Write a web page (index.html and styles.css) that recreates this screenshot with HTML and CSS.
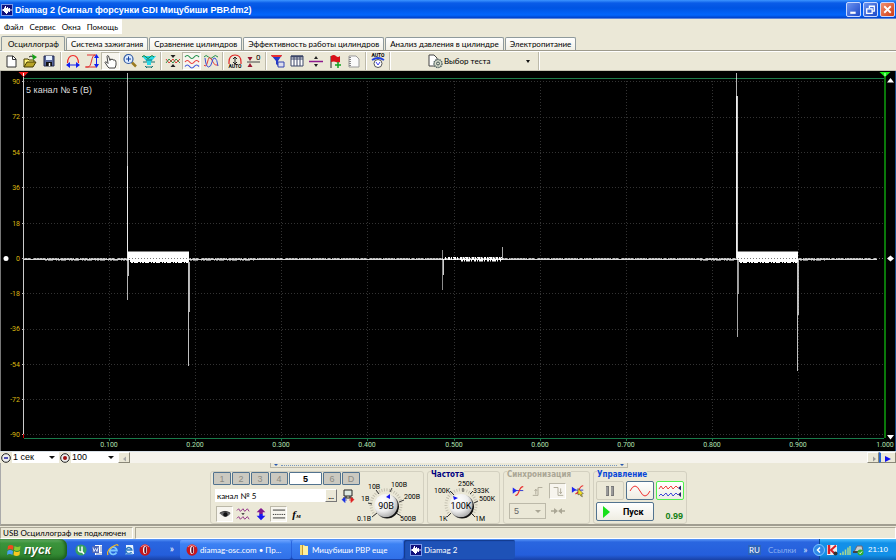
FILE: index.html
```html
<!DOCTYPE html>
<html lang="ru">
<head>
<meta charset="utf-8">
<title>Diamag 2</title>
<link rel="stylesheet" href="styles.css">
</head>
<body>
<svg class="defs" width="0" height="0" aria-hidden="true">
  <defs>
    <symbol id="app" viewBox="0 0 12 12"><rect width="12" height="12" fill="#7d9be8"/><rect x="1" y="1" width="10" height="10" fill="#10107c"/><path d="M1 6h1M2.500 5v2M3.500 3.500v4.500M4.500 2v7M5.500 4v6M6.500 3v6M7.500 4.500v3M8.500 4v4M9.500 5.500v1M10 6h1" stroke="#fff"/></symbol>
    <symbol id="opera" viewBox="0 0 12 12"><ellipse cx="6" cy="6" rx="5.500" ry="5.800" fill="#c8161c"/><path d="M2 3Q6-1 10 3" stroke="#f08080" fill="none"/><ellipse cx="6" cy="6" rx="2" ry="4" fill="#fff"/><ellipse cx="6.300" cy="6" rx="1" ry="3.600" fill="#5b0d25"/></symbol>
    <radialGradient id="dial" cx=".35" cy=".3" r=".75"><stop offset="0" stop-color="#fff"/><stop offset=".6" stop-color="#eee"/><stop offset="1" stop-color="#aaa"/></radialGradient>
    <linearGradient id="rim" x1="0" y1="0" x2="1" y2="1"><stop offset=".3" stop-color="#ddd"/><stop offset=".75" stop-color="#111"/></linearGradient>
  </defs>
</svg>

<header class="titlebar">
  <svg class="i12" aria-hidden="true"><use href="#app"/></svg>
  <h1>Diamag 2 (Сигнал форсунки GDI Мицубиши РВР.dm2)</h1>
  <div class="winbtns">
    <button class="winbtn" aria-label="Свернуть"><svg viewBox="0 0 12 12"><path d="M3 9h5" stroke="#fff" stroke-width="2"/></svg></button>
    <button class="winbtn" aria-label="Восстановить"><svg viewBox="0 0 12 12"><path d="M5 4.500V3h4.500v4.500H8M2.500 5.500h5v4h-5z" fill="none" stroke="#fff" stroke-width="1.200"/></svg></button>
    <button class="winbtn close" aria-label="Закрыть"><svg viewBox="0 0 12 12"><path d="M3 3l6 6M9 3l-6 6" stroke="#fff" stroke-width="1.700"/></svg></button>
  </div>
</header>

<nav class="menubar"><div class="menus">
  <button>Файл</button><button>Сервис</button><button>Окна</button><button>Помощь</button>
</div></nav>

<div class="tabs" role="tablist">
  <button class="tab active" role="tab" aria-selected="true">Осциллограф</button>
  <button class="tab" role="tab">Система зажигания</button>
  <button class="tab" role="tab">Сравнение цилиндров</button>
  <button class="tab" role="tab">Эффективность работы цилиндров</button>
  <button class="tab" role="tab">Анализ давления в цилиндре</button>
  <button class="tab" role="tab">Электропитание</button>
</div>

<div class="toolbar">
  <button class="tool" aria-label="Новый"><svg viewBox="0 0 16 16"><path d="M4 3h6l3 3v8H4z" fill="#fff" stroke="#333"/><path d="M9.500 3v3.500H13" fill="none" stroke="#333"/></svg></button>
  <button class="tool" aria-label="Открыть"><svg viewBox="0 0 16 16"><path d="M2 14V6h4l1 1h5v2" fill="#fff27a" stroke="#443c00"/><path d="M2 14l3-5h9l-3 5z" fill="#b8a428" stroke="#443c00"/><path d="M7 4q2-2 4 0" fill="none" stroke="#222"/><path d="M10 1l5 3-4 3z" fill="#16a016"/></svg></button>
  <button class="tool" aria-label="Сохранить"><svg viewBox="0 0 16 16"><path d="M3 3h10v10H3z" fill="#58679a" stroke="#222b50"/><path d="M5 3h6v4H5z" fill="#e8f2ff"/><path d="M5 9h6v4H5z" fill="#111"/><path d="M8.500 10v3" stroke="#fff" stroke-width="1.500"/></svg></button>
  <i class="sep"></i>
  <button class="tool" aria-label="Период"><svg viewBox="0 0 16 16"><path d="M2.500 10Q3 2.500 8 2.500T13.500 10" fill="none" stroke="#f02828" stroke-width="1.200"/><path d="M2 12h12" stroke="#1020f0"/><path d="M1 12l4-3v6zM15 12l-4-3v6z" fill="#1020f0"/></svg></button>
  <button class="tool" aria-label="Амплитуда"><svg viewBox="0 0 16 16"><path d="M1 14h3c4 0 3-12 7-12h1M3 2h8M2 14h10" fill="none" stroke="#e03030"/><path d="M12.500 3v11" stroke="#1020f0"/><path d="M12.500 1l2.500 4h-5zM12.500 15l2.500-4h-5z" fill="#1020f0"/></svg></button>
  <button class="tool on" aria-label="Рука"><svg viewBox="0 0 16 16"><path d="M5 14L2 9.500q0-1.500 2 0l1 1L4 3.500Q4 2 5.500 3L7 7.500 7.500 6q1-.5 1.500 1l.5-.8q1 0 1.300 1.300l.7-.5q1.500 0 1.500 2.500V12l-1 3H6z" fill="#fff" stroke="#333" stroke-width=".9"/></svg></button>
  <button class="tool" aria-label="Масштаб"><svg viewBox="0 0 16 16"><path d="M10 9.500l4 4" stroke="#9a7a20" stroke-width="2.500"/><circle cx="6.500" cy="6" r="4.500" fill="#ddecff" stroke="#3059a0" stroke-width="1.200"/><path d="M4 6h5M6.500 3.500v5" stroke="#1040a0"/></svg></button>
  <button class="tool" aria-label="Фильтр сигнала"><svg viewBox="0 0 16 16"><path d="M1 3h14L10 9v3H6V9z" fill="#28d8e8"/><path d="M1 4q2-3 4 0t4 0 4 0" fill="none" stroke="#188038"/><path d="M5 7h6M2 9h4M10 9h4M5 14h6M4 13l2 2M12 13l-2 2" stroke="#187070"/></svg></button>
  <i class="sep"></i>
  <button class="tool" aria-label="Сжать"><svg viewBox="0 0 16 16"><path d="M1 6l3 4 4-4 3 4 4-4" fill="none" stroke="#e02828" stroke-width=".9"/><path d="M1 10l3-4 4 4 3-4 4 4" fill="none" stroke="#208840" stroke-width=".9"/><path d="M8 5L5.500 2h5zM8 11l-2.500 3h5z" fill="#222"/></svg></button>
  <button class="tool on" aria-label="Раздельно"><svg viewBox="0 0 16 16"><g fill="none" stroke-width="1.200"><path d="M1 4q2.300-3 4.600 0t4.600 0 4.800 0" stroke="#20904a"/><path d="M1 9q2.300-3 4.600 0t4.600 0 4.800 0" stroke="#e83a3a"/><path d="M1 13.500q2.300-3 4.600 0t4.600 0 4.800 0" stroke="#3a50d8"/></g></svg></button>
  <button class="tool" aria-label="Совместно"><svg viewBox="0 0 16 16"><g fill="none"><path d="M1 4q2-3 4.500 0t4.500 0 5 0" stroke="#20904a"/><path d="M1 12q2 3 3.500-3t3-4 3 5 4.500 2" stroke="#e83a3a"/><path d="M2 5q1 9 3.500 9T9 9t3-4 3 8" stroke="#3a50d8"/></g></svg></button>
  <i class="sep"></i>
  <button class="tool" aria-label="Авто масштаб"><svg viewBox="0 0 16 16"><path d="M2 11V9Q2 2 8 2t6 7v2" fill="none" stroke="#e02828" stroke-width="1.200"/><path d="M8 4v7M6 6l2-2 2 2M6 9l2 2 2-2" fill="none" stroke="#222"/><text x="8" y="15" class="auto">AUTO</text></svg></button>
  <button class="tool" aria-label="Ноль"><svg viewBox="0 0 16 16"><path d="M1 9h6M7 9h7" stroke="#444"/><path d="M4 8L1.500 4h5zM4 10l-2.500 4h5z" fill="#981830"/><text x="10" y="7" class="zero">0</text></svg></button>
  <i class="sep"></i>
  <button class="tool" aria-label="Фильтр"><svg viewBox="0 0 16 16"><path d="M1 2h11L8 8v5L6 11V8z" fill="#2438c8"/><path d="M1 2h11l-1 2H2z" fill="#e83030"/><path d="M8 9h6v5H8z" fill="#dde" stroke="#3344b0"/></svg></button>
  <button class="tool" aria-label="Таблица"><svg viewBox="0 0 16 16"><path d="M2 3h12v10H2zM2 6h12M5 3v10M8 3v10M11 3v10" fill="#fff" stroke="#3c4668"/><path d="M2 3.500h12" stroke="#3c4668" stroke-width="2"/></svg></button>
  <button class="tool" aria-label="Разделить"><svg viewBox="0 0 16 16"><path d="M1 8.500h14" stroke="#8c188c" stroke-width="1.500"/><path d="M8 3l2 3H6zM8 14l2-3H6z" fill="#222"/></svg></button>
  <button class="tool" aria-label="Метка"><svg viewBox="0 0 16 16"><path d="M4 3v12" stroke="#222"/><path d="M4 3q3-2 5 0t4 0v6q-2 1-4 0T4 9z" fill="#d81018"/><path d="M11 9v6M8 12h6" stroke="#10a020" stroke-width="1.500"/></svg></button>
  <button class="tool" aria-label="Отчёт"><svg viewBox="0 0 16 16"><path d="M3 3h7l3 3v8H3z" fill="#fafafa" stroke="#999"/><path d="M4 4v10" stroke="#888" stroke-width="2" stroke-dasharray="1 1"/></svg></button>
  <i class="sep"></i>
  <button class="tool" aria-label="Автотест"><svg viewBox="0 0 16 16"><text x="8" y="4" class="auto">AUTO</text><path d="M2 7q6-4 12 0" fill="none" stroke="#2040e0" stroke-width="1.800"/><circle cx="8" cy="10.500" r="4" fill="#fff" stroke="#555"/><path d="M6 9l2 3 2-3" fill="none" stroke="#4040f0"/></svg></button>
  <i class="sep"></i>
  <button class="test"><svg viewBox="0 0 16 16"><path d="M2 2h5l3 3v8H2z" fill="#fff" stroke="#444"/><circle cx="11" cy="10.500" r="4" fill="#d8dccc" stroke="#566" stroke-dasharray="1.500 .7" stroke-width="1.500"/><circle cx="11" cy="10.500" r="1.500" fill="none" stroke="#455"/></svg><span>Выбор теста</span><b class="tri"></b></button>
  <i class="sep"></i>
</div>

<main class="scope">
<svg viewBox="0 71 896 380" role="img" aria-label="Осциллограмма">
  <path d="M.5 71v380" stroke="#777"/><path d="M895.500 71v380" stroke="#164a86"/>
  <g stroke="#333" stroke-dasharray="1 2">
    <path d="M24 81.500H884M24 117.500H884M24 152.500H884M24 187.500H884M24 223.500H884M24 293.500H884M24 329.500H884M24 364.500H884M24 399.500H884M24 434.500H884"/>
    <path d="M109.500 81V438M195.500 81V438M281.500 81V438M367.500 81V438M454.500 81V438M540.500 81V438M626.500 81V438M712.500 81V438M798.500 81V438"/>
  </g>
  <path d="M24 78.500H884M24 438.500H884" stroke="#1a7a4a"/>
  <path d="M23.500 74V438" stroke="#ccc"/><path d="M22 81.500h2M22 117.500h2M22 152.500h2M22 187.500h2M22 223.500h2M22 258.500h2M22 293.500h2M22 329.500h2M22 364.500h2M22 399.500h2M22 434.500h2" stroke="#bbb"/><path d="M23.500 434v4" stroke="#c00"/>
  <path d="M109.500 438v3M195.500 438v3M281.500 438v3M367.500 438v3M454.500 438v3M540.500 438v3M626.500 438v3M712.500 438v3M798.500 438v3" stroke="#1a7a4a"/>
  <path d="M885 74V438" stroke="#0a780a" stroke-width="2"/>
  <path d="M18.500 72h10l-5 5z" fill="#f01818"/><path d="M23.500 73v3" stroke="#fff"/>
  <path d="M879.500 72h11l-5.500 5z" fill="#18f018"/><path d="M885 73v3" stroke="#dfd"/>
  <path d="M887 82.500h7l-3.500-4.500zM887 435h7l-3.500 4.500z" fill="#fff"/>
  <circle cx="6" cy="258.500" r="2.500" fill="#fff"/><path d="M887 258.500l3.500-3 3.500 3-3.500 3z" fill="#fff"/>
  <g stroke="#fff" fill="none">
    <path d="M24 259.500H877" stroke-opacity=".85"/><path d="M24 258.500H877" stroke-opacity=".75" stroke-dasharray="7 2 13 1 4 1"/>
    <path d="M45 260.500H128M190 260.500H255M700 260.500H737M800 260.500H825" stroke-opacity=".5" stroke-dasharray="2 1 5 3 1 1"/>
    <path d="M127.500 73V300" stroke-opacity=".7"/><path d="M127.500 166V258M128.500 252V276M188.500 255V366" stroke-opacity=".75"/><path d="M189.500 262V312" stroke-opacity=".7"/>
    <path d="M442.500 250V290" stroke-opacity=".55"/><path d="M443.500 259V275" stroke-opacity=".8"/><path d="M502.500 247V260" stroke-opacity=".65"/>
    <path d="M445 258.500H502" stroke-width="3" stroke-dasharray="1 2 2 1 1 1 3 1"/><path d="M461 259.500H501" stroke-width="4" stroke-dasharray="2 1 1 1 4 1 1 2"/>
    <path d="M736.500 73V258" stroke-opacity=".7"/><path d="M737 96V258" stroke-width="2" stroke-opacity=".8"/><path d="M737.500 258V337" stroke-opacity=".65"/><path d="M738.500 259V294" stroke-opacity=".6"/><path d="M797.500 256V371" stroke-opacity=".75"/><path d="M798.500 260V315" stroke-opacity=".7"/>
  </g>
  <path d="M128 251.500H189V262H130V260H128zM737 251.500H798V262H739V260H737z" fill="#fff"/>
  <path d="M131 262.500H189M740 262.500H798" stroke="#fff" stroke-dasharray="2 1 4 2 1 1"/><path d="M24 258.500H884" stroke="#777" stroke-dasharray="1 2"/>
  <text x="26" y="93" class="chan">5 канал № 5 (В)</text>
  <g class="ylab"><text x="20" y="84">90</text><text x="20" y="119">72</text><text x="20" y="155">54</text><text x="20" y="190">36</text><text x="20" y="226">18</text><text x="20" y="261">0</text><text x="20" y="296">-18</text><text x="20" y="331">-36</text><text x="20" y="367">-54</text><text x="20" y="402">-72</text><text x="20" y="437">-90</text></g>
  <g class="xlab"><text x="109" y="447">0.100</text><text x="195" y="447">0.200</text><text x="281" y="447">0.300</text><text x="367" y="447">0.400</text><text x="454" y="447">0.500</text><text x="540" y="447">0.600</text><text x="626" y="447">0.700</text><text x="712" y="447">0.800</text><text x="798" y="447">0.900</text><text x="885" y="447">1.000</text></g>
</svg>
</main>

<div class="scrollrow">
  <button class="mini" aria-label="Уменьшить"><svg viewBox="0 0 12 12"><circle cx="6" cy="6" r="4.300" fill="#eee" stroke="#222"/><path d="M4 6h4" stroke="#2020a0" stroke-width="1.500"/></svg></button>
  <div class="combo"><select aria-label="Время"><option>1 сек</option></select><b class="tri"></b></div>
  <button class="mini" aria-label="Скорость"><svg viewBox="0 0 12 12"><circle cx="6" cy="6" r="4.300" fill="#eee" stroke="#222"/><circle cx="6" cy="6" r="2" fill="#a01010"/></svg></button>
  <div class="combo"><select aria-label="Масштаб"><option>100</option></select><b class="tri"></b></div>
  <button class="mini raised" aria-label="Влево"><svg viewBox="0 0 12 12"><path d="M7 3.500v5L4 6z" fill="#aaa"/></svg></button>
  <div class="track"></div>
  <button class="mini raised" aria-label="Вправо"><svg viewBox="0 0 12 12"><path d="M5 3.500v5L8 6z" fill="#999"/></svg></button>
  <button class="mini raised play" aria-label="Дальше"><svg viewBox="0 0 12 12"><path d="M3 3v6l6-3z" fill="#1010f0"/></svg></button>
</div>

<div class="panel">
  <div class="splitter"><b class="tri"></b><span></span><b class="tri"></b></div>
  <div class="groups">
    <section class="group channel">
      <div class="chcol">
        <div class="chbtns"><button>1</button><button>2</button><button>3</button><button>4</button><button class="active">5</button><button>6</button><button>D</button></div>
        <div class="namerow">
          <input type="text" value="канал № 5" aria-label="Имя канала"><button class="dots" aria-label="Выбрать">...</button>
          <svg class="i14" viewBox="0 0 14 14" aria-hidden="true"><path d="M3 1h8v6H3z" fill="#dde8e0" stroke="#222"/><path d="M2 9h10M5 7v2M9 7v2" stroke="#222"/><path d="M1 10.500l3-2v5zM4 11h2" fill="#1830e0" stroke="#1830e0" stroke-width=".7"/><path d="M13 10.500l-3-2v5zM8 11h2" fill="#e02020" stroke="#e02020" stroke-width=".7"/></svg>
        </div>
        <div class="iconrow">
          <button class="sq on" aria-label="Показать"><svg viewBox="0 0 16 16"><path d="M2 7q6-4 12 0l-1 2q-5 4-9 0z" fill="#666"/><circle cx="8.500" cy="8.500" r="2.500" fill="#111"/><path d="M2 7q6-4 12 0" stroke="#222" fill="none"/></svg></button>
          <button class="sq" aria-label="Сжать сигнал"><svg viewBox="0 0 16 16"><path d="M1 4l2-2 2 3 3-3 2 3 3-3 2 3M1 13l2-2 2 3 3-3 2 3 3-3 2 3" fill="none" stroke="#8a2080"/><path d="M8 9L6 7h4z" fill="#222"/></svg></button>
          <button class="sq" aria-label="Сдвиг"><svg viewBox="0 0 16 16"><path d="M8 1l5 5h-3v2H6V6H3z" fill="#801890"/><path d="M8 15l5-5h-3V8H6v2H3z" fill="#1818f0"/></svg></button>
          <button class="sq on" aria-label="Линии"><svg viewBox="0 0 16 16"><path d="M1 3.500h14M1 12.500h14" stroke="#222"/><path d="M1 8.500h14" stroke="#222" stroke-dasharray="1.500 1"/></svg></button>
          <button class="sq fn" aria-label="Функция"><i>f<sub>м</sub></i></button>
        </div>
      </div>
      <svg class="knob" viewBox="361 472 62 52" role="img" aria-label="90В">
        <g stroke="#c4c0b0" stroke-width="3" fill="none"><path d="M376 515A15 15 0 1 1 398 515" stroke-dasharray="1 1.500"/></g>
        <path d="M378 513l-5 4M373 504l-4-1M380 494l-3-4M391 492l2-4M400 502l5-2M397 513l5 3" stroke="#333"/>
        <circle cx="388" cy="506.500" r="12" fill="url(#rim)"/><circle cx="387" cy="505.500" r="11.500" fill="url(#dial)"/>
        <path d="M387 497l4-3v5z" fill="#1818f0"/>
        <text x="387" y="509" class="val">90В</text>
        <g class="kl"><text x="358" y="521">0.1В</text><text x="362" y="501">1В</text><text x="369" y="489">10В</text><text x="392" y="487">100В</text><text x="405" y="499">200В</text><text x="401" y="521">500В</text></g>
      </svg>
    </section>
    <section class="group freq">
      <h2>Частота</h2>
      <svg class="knob" viewBox="427 472 71 52" role="img" aria-label="100K">
        <g stroke="#c4c0b0" stroke-width="3" fill="none"><path d="M449 515A15 15 0 1 1 471 515" stroke-dasharray="1 1.500"/></g>
        <path d="M450 513l-4 4M453 495l-4-4M462 488v4M469 494l3-3M473 503l4-2M470 513l4 4" stroke="#333"/>
        <circle cx="461" cy="506.500" r="12" fill="url(#rim)"/><circle cx="460" cy="505.500" r="11.500" fill="url(#dial)"/>
        <path d="M452 496l5 2-4 2z" fill="#1818f0"/>
        <text x="460" y="509" class="val">100K</text>
        <g class="kl"><text x="438" y="521">1K</text><text x="433" y="493">100K</text><text x="457" y="486">250K</text><text x="472" y="493">333K</text><text x="478" y="501">500K</text><text x="474" y="521">1M</text></g>
      </svg>
    </section>
    <section class="group sync">
      <h2>Синхронизация</h2>
      <div class="row">
        <button class="sq" aria-label="Уровень"><svg viewBox="0 0 16 16"><path d="M2 7.500h12" stroke="#2028d0"/><path d="M2 4v7l5-3.500z" fill="#2028f0"/><path d="M5 13c5 1 3-10 9-10" fill="none" stroke="#e83030" stroke-width="1.300"/></svg></button>
        <button class="sq" aria-label="Фронт"><svg viewBox="0 0 16 16"><path d="M2 13h6V4h5M5.500 12V6M4 8l1.500-2L7 8" fill="none" stroke="#aaa695"/></svg></button>
        <button class="sq on" aria-label="Спад"><svg viewBox="0 0 16 16"><path d="M3 4h5v9h6M11 5v6M9.500 9l1.500 2L12.500 9" fill="none" stroke="#aaa695"/></svg></button>
        <button class="sq" aria-label="Вручную"><svg viewBox="0 0 16 16"><path d="M2 7h12" stroke="#2028d0"/><path d="M1 3v7l5-3.500z" fill="#2028f0"/><path d="M5 11c5 1 3-9 9-9" fill="none" stroke="#e83030" stroke-width="1.300"/><path d="M8 5l6 6-2 .5 1 3-2-1-1-2-2 1z" fill="#f4e020" stroke="#333" stroke-width=".6"/></svg></button>
      </div>
      <div class="row">
        <div class="combo flat"><select aria-label="Канал синхронизации" disabled><option>5</option></select><b class="tri"></b></div>
        <svg class="i14" viewBox="0 0 14 14" aria-hidden="true"><path d="M0 7h4M10 7h4" stroke="#aaa695" stroke-width="1.500"/><path d="M3 4l4 3-4 3zM11 4L7 7l4 3z" fill="#aaa695"/></svg>
      </div>
    </section>
    <section class="group control">
      <h2>Управление</h2>
      <div class="ctl">
        <button class="pause" aria-label="Пауза"><svg viewBox="0 0 24 16"><path d="M9.500 3v10M14.500 3v10" stroke="#777" stroke-width="3"/><path d="M9 4v8M14 4v8" stroke="#bbb"/></svg></button>
        <button aria-label="Один кадр"><svg viewBox="0 0 24 16"><path d="M2 8q5-10 10 0t10 0" fill="none" stroke="#f03030"/></svg></button>
        <button class="loop" aria-label="Непрерывно"><svg viewBox="0 0 24 16"><path d="M1 6l2-3 2 3 3-3 2 3 3-3 2 3 3-3 2 2" fill="none" stroke="#f04040"/><path d="M1 13l2-2 2 2 3-3 2 3 3-3 2 3 3-3 2 2" fill="none" stroke="#4048d8"/><path d="M23 2.500v5L20 5zM23 9v5l-3-2.500z" fill="#226"/></svg></button>
        <button class="start"><b></b><span>Пуск</span></button>
        <output>0.99</output>
      </div>
    </section>
  </div>
</div>

<footer class="status"><span>USB Осциллограф не подключен</span><span></span></footer>

<nav class="taskbar">
  <button class="startbtn"><svg viewBox="0 0 14 14" aria-hidden="true"><path d="M1 3q3-2 5.500 0L6 7Q3 5 .5 7z" fill="#f04a20"/><path d="M7.500 3q3 2 6 0L13 7q-3 2-6 0z" fill="#88cc30"/><path d="M.5 8Q3 6 6 8l-.5 4q-3-2-5.500 0z" fill="#48a0f0"/><path d="M7 8q3 2 6 0l-.5 4q-3 2-6 0z" fill="#f8c820"/></svg><span>пуск</span></button>
  <div class="quick">
    <a href="#" aria-label="uTorrent"><svg viewBox="0 0 12 12"><circle cx="6" cy="6" r="5.600" fill="#35a060"/><path d="M3.500 2.500v4q1 2 3.500 1.500M7 2.500v5l2 2.500" stroke="#fff" stroke-width="1.500" fill="none"/></svg></a>
    <a href="#" aria-label="Word"><svg viewBox="0 0 12 12"><path d="M4 1h7v10H4z" fill="#fff"/><path d="M1 2h7v7H1z" fill="#4b66b8"/><path d="M2 3.500l1 4 1.500-3 1.500 3 1-4" stroke="#dfe8ff" fill="none"/><path d="M9 3h2M9 5h2M9 7h2M5 10h6" stroke="#6c88c8"/></svg></a>
    <a href="#" aria-label="Internet Explorer"><svg viewBox="0 0 12 12"><path d="M9.500 8.500a3.600 3.600 0 1 1 .4-2H3" fill="none" stroke="#7cc8ff" stroke-width="1.800"/><path d="M1 11Q-1 7 5 3t6-1" fill="none" stroke="#f5b820" stroke-width="1.200"/></svg></a>
    <a href="#" aria-label="Почта"><svg viewBox="0 0 12 12"><path d="M3 1h7l1 9H3z" fill="#e8f4ff"/><path d="M8.500 8a3 3 0 1 1 .3-2H4" fill="none" stroke="#2878c0" stroke-width="1.500"/><path d="M2 10h8" stroke="#6aa8e0"/></svg></a>
    <a href="#" aria-label="Opera"><svg><use href="#opera"/></svg></a>
    <span class="more">»</span>
  </div>
  <div class="tasks">
    <button><svg><use href="#opera"/></svg><span>diamag-osc.com • Пр...</span></button>
    <button><svg viewBox="0 0 12 12"><path d="M2 1h4l1 1h3v9H2z" fill="#f4dc78"/><path d="M5 2h5v9H5z" fill="#fff0a0"/><path d="M4.500 1v10" stroke="#c89a30"/></svg><span>Мицубиши РВР еще</span></button>
    <button class="active"><svg><use href="#app"/></svg><span>Diamag 2</span></button>
  </div>
  <div class="lang"><b>RU</b><span>Ссылки</span><span class="more">»</span></div>
  <div class="tray">
    <button class="chev" aria-label="Показать значки"><svg viewBox="0 0 12 12"><circle cx="6" cy="6" r="5.500" fill="#2d8ae8" stroke="#7cc4ff"/><path d="M7 3.500L4.500 6 7 8.500" fill="none" stroke="#fff" stroke-width="1.500"/></svg></button>
    <svg viewBox="0 0 12 12"><path d="M1 1h10v10H1z" fill="#f0f0f0"/><path d="M3 1v9" stroke="#d82028" stroke-width="2.500"/><path d="M10 1.500L5 6l4 4" stroke="#d82028" stroke-width="2" fill="none"/><circle cx="9.500" cy="9.500" r="2" fill="#333"/></svg>
    <svg viewBox="0 0 12 12"><path d="M1.500 9v2M4 7.500V11M6.500 5.500V11M9 3.500V11M11 2v9" stroke="#a8d890" stroke-width="1.500"/></svg>
    <svg viewBox="0 0 12 12"><path d="M2 8L5 2h5l1 5z" fill="#c8ccd0" stroke="#667"/><path d="M1 8h6" stroke="#444" stroke-width="2"/><circle cx="8.500" cy="8.500" r="3" fill="#30b030"/><path d="M7 8.500l1.200 1.200L10 7.500" stroke="#fff" fill="none"/></svg>
    <time>21:10</time>
  </div>
</nav>
</body>
</html>
```

FILE: styles.css
```css
* { box-sizing: border-box; }
body { margin: 0; min-height: 100vh; display: flex; flex-direction: column; background: #ebe8d7; color: #000; font: 8px/10px Lato, "Liberation Sans", sans-serif; overflow: hidden; }
button, input, select { font: inherit; color: inherit; border: 0; padding: 0; margin: 0; background: none; border-radius: 0; }
h1, h2 { margin: 0; font-size: inherit; }
svg { display: block; flex: none; }
.defs { position: absolute; }
.i12 { width: 12px; height: 12px; }
.i14 { width: 14px; height: 14px; }
.tri { width: 0; height: 0; border: 3px solid transparent; border-top: 3px solid #111; border-bottom: 0; flex: none; }

.titlebar { height: 19px; flex: none; display: flex; align-items: center; gap: 2px; padding: 0 1px 0 1px; background: linear-gradient(#3d95ff 0, #0a5ce8 3px, #0054e3 8px, #0266fc 15px, #0040c8 18px, #b8c8e8 19px); }
.titlebar h1 { flex: 1; color: #fff; font: bold 9px/14px "Liberation Sans", sans-serif; white-space: nowrap; }
.winbtns { display: flex; gap: 2px; }
.winbtn { width: 15px; height: 15px; border: 1px solid #c8d8ff; border-radius: 2px; background: linear-gradient(135deg, #6b93f0, #1d49c8); }
.winbtn.close { background: linear-gradient(135deg, #f09070, #d03c14); }

.menubar { height: 18px; flex: none; }
.menus { display: inline-flex; gap: 6px; height: 15px; padding: 0 4px; background: #fff; }

.tabs { flex: none; display: flex; align-items: flex-end; gap: 1px; height: 14px; padding: 0 0 0 1px; border-bottom: 1px solid #9d9a8c; }
.tab { height: 13px; padding: 0 4px; border: 1px solid #8f9a9c; border-bottom: 0; border-radius: 2px 2px 0 0; background: linear-gradient(#fff, #f2f0e6); white-space: nowrap; }
.tab.active { height: 15px; padding: 0 5px 1px 6px; margin-bottom: -1px; background: #ebe8d7; }

.toolbar { flex: none; height: 20px; display: flex; align-items: center; padding-left: 1px; border-top: 1px solid #fff; border-bottom: 1px solid #c5c2b2; }
.tool { width: 19px; height: 18px; display: grid; place-items: center; border: 1px solid transparent; }
.tool svg, .test svg { width: 16px; height: 16px; }
.tool.on, .sq.on { background: #f7f5ee; border: 1px solid #bbb8a8; border-right-color: #fff; border-bottom-color: #fff; }
.sep { width: 5px; height: 18px; flex: none; border-left: 2px solid transparent; background: linear-gradient(90deg, #bcb9a9 1px, #fff 1px 2px, transparent 2px) content-box; }
.auto { font: bold 5px Roboto, sans-serif; text-anchor: middle; }
.zero { font: 8px Roboto, sans-serif; }
.test { display: flex; align-items: center; gap: 1px; width: 144px; padding: 0 6px 0 35px; }
.test span { flex: 1; text-align: left; }
.test .tri { border-width: 2px; border-top-width: 3px; }

.scope { flex: 1; background: #000; min-height: 0; }
.scope svg { width: 100%; height: auto; }
.scope text { font-family: Roboto, "Liberation Sans", sans-serif; }
.scope .chan { fill: #ddd; font: 9px "Liberation Sans", sans-serif; }
.ylab { fill: #dcb810; font-size: 7px; text-anchor: end; }
.xlab { fill: #b0e0b0; font-size: 7px; text-anchor: middle; }

.scrollrow { flex: none; height: 12px; display: flex; border-top: 1px solid #d8e0e8; }
.mini { width: 12px; height: 11px; flex: none; display: grid; place-items: center; }
.mini svg { width: 12px; height: 12px; }
.raised { background: #ebe8d7; border: 1px solid; border-color: #fff #8a8778 #8a8778 #fff; }
.play { width: 17px; border-left: 2px solid #2868d0; }
.combo { position: relative; display: flex; width: 47px; background: #fff; }
.combo select { width: 100%; appearance: none; padding: 0 1px; font: 9px/11px "Liberation Sans", sans-serif; }
.combo .tri { position: absolute; right: 4px; top: 4px; pointer-events: none; }
.track { flex: 1; background: #f5f3ec; }

.panel { flex: none; height: 63px; display: flex; flex-direction: column; align-items: center; border-left: 1px solid #aaa; border-bottom: 2px solid #a19e91; }
.splitter { width: 40%; height: 5px; display: flex; align-items: center; justify-content: space-between; gap: 3px; padding: 0 3px; border: 1px solid #bcb9a9; border-top: 0; }
.splitter .tri { border-width: 2px 2px 0; border-top-color: #2858b0; }
.splitter span { flex: 1; border-top: 1px dotted #7898c0; }
.groups { display: flex; gap: 3px; padding-top: 3px; }
.group { height: 53px; border: 1px solid #d3d0c0; border-radius: 3px; position: relative; }
.group h2 { position: absolute; top: -2px; left: 3px; background: #ebe8d7; color: #000080; font: bold 8px/9px "DejaVu Sans Condensed", sans-serif; }
.channel { display: flex; width: 214px; padding-left: 2px; }
.chcol { width: 147px; display: flex; flex-direction: column; gap: 4px; }
.chbtns { display: flex; gap: 1px; }
.chbtns button { width: 18px; height: 13px; border: 1px solid #52738f; border-radius: 1px; background: #cbc9c0; color: #8c8b84; font: 9px/10px "Liberation Sans", sans-serif; }
.chbtns .active { width: 33px; background: #fff; color: #000; font-weight: bold; }
.namerow { display: flex; align-items: center; height: 13px; padding-left: 2px; }
.namerow input { width: 110px; height: 13px; background: #fff; padding: 0 2px; }
.dots { width: 12px; height: 13px; line-height: 6px; background: #ebe8d7; border: 1px solid; border-color: #fff #777 #777 #fff; font-weight: bold; }
.namerow svg { margin-left: 4px; }
.iconrow { display: flex; gap: 1px; padding-left: 3px; }
.sq { width: 17px; height: 16px; display: grid; place-items: center; border: 1px solid transparent; }
.sq svg { width: 14px; height: 14px; }
.fn { font: bold 11px/12px "Liberation Serif", serif; }
.fn sub { font-size: 7px; line-height: 0; vertical-align: baseline; }
.knob { width: 62px; height: 52px; overflow: visible; }
.knob text { font-family: Roboto, "Liberation Sans", sans-serif; }
.kl { font-size: 7px; }
.val { font-size: 9px; text-anchor: middle; }
.freq { width: 73px; }
.freq .knob { width: 71px; }
.sync { width: 87px; padding: 11px 3px 0 5px; display: flex; flex-direction: column; gap: 4px; }
.sync h2 { color: #aaa695; }
.row { display: flex; align-items: center; gap: 3px; }
.flat { width: 37px; height: 16px; margin-right: 2px; background: #ebe8d7; border: 1px solid #bcb9a9; }
.flat select { color: #666; opacity: 1; padding-left: 4px; }
.flat .tri { top: 6px; border-top-color: #aaa695; }
.control { width: 94px; padding: 9px 2px 0; }
.control h2 { color: #0846d8; }
.ctl { display: grid; grid-template-columns: 28px 28px 28px; gap: 2px; }
.ctl button { height: 19px; display: grid; place-items: center; border: 1px solid #52738f; border-radius: 2px; background: linear-gradient(#fff, #efede2); }
.ctl svg { width: 24px; height: 16px; }
.ctl .pause { background: #ebe8d7; border-color: #d0cdbd; }
.ctl .loop { border-color: #50f050; }
.ctl .start { grid-column: span 2; display: flex; align-items: center; gap: 13px; padding-left: 6px; font: bold 9px/10px Roboto, sans-serif; }
.start b { border: 6px solid transparent; border-left: 7px solid #18e018; border-right: 0; }
.ctl output { align-self: end; justify-self: end; padding-right: 1px; color: #128012; font: bold 9px/10px "Liberation Sans", sans-serif; }

.status { flex: none; display: flex; gap: 2px; height: 13px; padding-top: 1px; }
.status span { height: 12px; width: 133px; padding: 0 2px; line-height: 11px; white-space: nowrap; border: 1px solid; border-color: #aaa797 #fff #fff #aaa797; }
.status span:last-child { flex: 1; }

.taskbar { flex: none; height: 21px; display: flex; align-items: center; background: linear-gradient(#5b98f8 0, #2a66e0 3px, #245edb 16px, #1941a5 21px); color: #fff; }
.taskbar svg { width: 12px; height: 12px; }
.startbtn { width: 67px; height: 21px; display: flex; align-items: center; gap: 3px; padding-left: 7px; border-radius: 0 7px 7px 0; background: linear-gradient(#70b870, #3c943c 4px, #338a33 15px, #236c23); box-shadow: inset -2px 0 3px #1c5c1c; font: italic bold 12px/18px "Liberation Sans", sans-serif; text-shadow: 1px 1px 1px #1c4c1c; }
.startbtn svg { width: 14px; height: 14px; }
.quick { display: flex; align-items: center; gap: 4px; width: 113px; padding-left: 8px; }
.more { font-size: 10px; line-height: 8px; align-self: flex-start; }
.quick .more { margin-left: auto; padding-right: 6px; }
.tasks { display: flex; gap: 1px; flex: 1; }
.tasks button { width: 111px; height: 19px; display: flex; align-items: center; gap: 2px; padding: 0 6px; border-radius: 2px; background: linear-gradient(#6ea4ff, #3c81f3 4px, #3070e8); white-space: nowrap; }
.tasks .active { background: #1e52b7; box-shadow: inset 1px 1px 1px #123a8c; }
.lang { display: flex; align-items: center; gap: 7px; width: 71px; }
.lang b { background: #2e64b8; padding: 0 1px; font-weight: normal; }
.lang span { color: #8cb0f0; }
.lang .more { color: #dce8ff; }
.tray { height: 21px; display: flex; align-items: center; gap: 1px; width: 77px; background: linear-gradient(#4cc0ff, #1290e8 4px, #1290e8 16px, #0c68b8); border-left: 1px solid #0c4c98; }
.chev { margin-left: -7px; }
.tray time { padding-left: 3px; font-family: "Liberation Sans", sans-serif; }
```
